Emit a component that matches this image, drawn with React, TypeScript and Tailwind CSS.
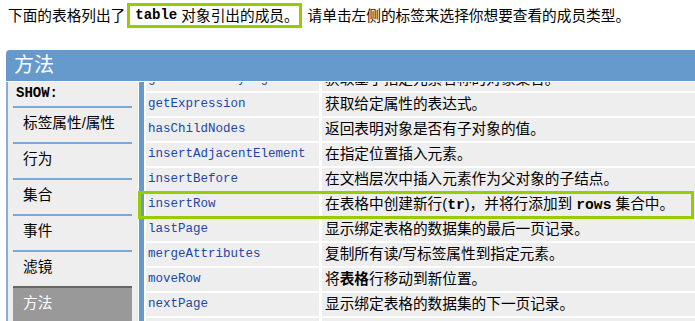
import React from 'react';

const mono = "font-['Liberation_Mono',monospace]";

const rows: { name: string; desc: React.ReactNode }[] = [
  { name: 'getElementsByTagName', desc: '获取基于指定元素名称的对象集合。' },
  { name: 'getExpression', desc: '获取给定属性的表达式。' },
  { name: 'hasChildNodes', desc: '返回表明对象是否有子对象的值。' },
  { name: 'insertAdjacentElement', desc: '在指定位置插入元素。' },
  { name: 'insertBefore', desc: '在文档层次中插入元素作为父对象的子结点。' },
  {
    name: 'insertRow',
    desc: (
      <>
        在表格中创建新行(<b className={mono}>tr</b>)，并将行添加到 <b className={mono}>rows</b> 集合中。
      </>
    ),
  },
  { name: 'lastPage', desc: '显示绑定表格的数据集的最后一页记录。' },
  { name: 'mergeAttributes', desc: '复制所有读/写标签属性到指定元素。' },
  {
    name: 'moveRow',
    desc: (
      <>
        将<b>表格</b>行移动到新位置。
      </>
    ),
  },
  { name: 'nextPage', desc: '显示绑定表格的数据集的下一页记录。' },
  { name: 'previousPage', desc: '显示绑定表格的数据集的上一页记录。' },
];

const tabs = ['标签属性/属性', '行为', '集合', '事件', '滤镜'];

export default function App() {
  return (
    <div className="relative w-[695px] h-[321px] overflow-hidden bg-white text-black text-[11pt] font-['Liberation_Sans','Noto_Sans_CJK_SC',sans-serif]">
      {/* intro line */}
      <div className="flex items-center h-[25px] mt-[3px] pl-2 whitespace-nowrap">
        <span>下面的表格列出了</span>
        <span className="ml-[2px] flex items-center h-[25px] border-[3px] border-[#99cc00] pl-[5px] pr-0">
          <b className={`${mono} text-[14px]`}>table</b>
          <span>&nbsp;对象引出的成员。</span>
        </span>
        <span className="ml-[6px]">请单击左侧的标签来选择你想要查看的成员类型。</span>
      </div>

      {/* panel */}
      <div className="ml-[6px] mt-[22px]">
        <div className="h-[31px] bg-[#6699cc] rounded-tl-[4px] text-white text-[20px] leading-[31px] pl-[8px]">
          方法
        </div>
        <div className="flex h-[240px] pt-[1px]">
          {/* sidebar */}
          <div className="w-[132px] border-l-2 border-[#86acd8] bg-[#eeeeee] pl-[5px] pr-[6px]">
            <div className={`h-[24px] leading-[22px] pl-[3px] font-bold text-[14px] ${mono}`}>SHOW:</div>
            {tabs.map(t => (
              <div key={t} className="h-[36px] border-t-2 border-[#7fa8d6] pl-[10px] leading-[31px]">
                {t}
              </div>
            ))}
            <div className="h-[60px] border-t-2 border-[#666666] bg-[#999999] text-white pl-[10px] leading-[31px]">
              方法
            </div>
          </div>
          <div className="w-[1px]" />
          <div className="w-[5px] bg-[#6699cc]" />
          <div className="w-[2px]" />
          {/* member table */}
          <div className="flex-1 overflow-hidden">
            <div className="-mt-[14px]">
              {rows.map(r => (
                <div key={r.name} className="flex gap-[3px] mb-[2px] h-[23px] leading-[23px] whitespace-nowrap">
                  <div className={`w-[173px] shrink-0 bg-[#eeeeee] pl-[2px] text-[12.5px] text-[#1a47a8] ${mono}`}>
                    {r.name}
                  </div>
                  <div className="flex-1 bg-[#eeeeee] pl-[3px]">{r.desc}</div>
                </div>
              ))}
            </div>
          </div>
        </div>
      </div>

      {/* highlight around insertRow */}
      <div className="absolute left-[138px] top-[191px] w-[556px] h-[28px] border-[3px] border-[#99cc00]" />
    </div>
  );
}
